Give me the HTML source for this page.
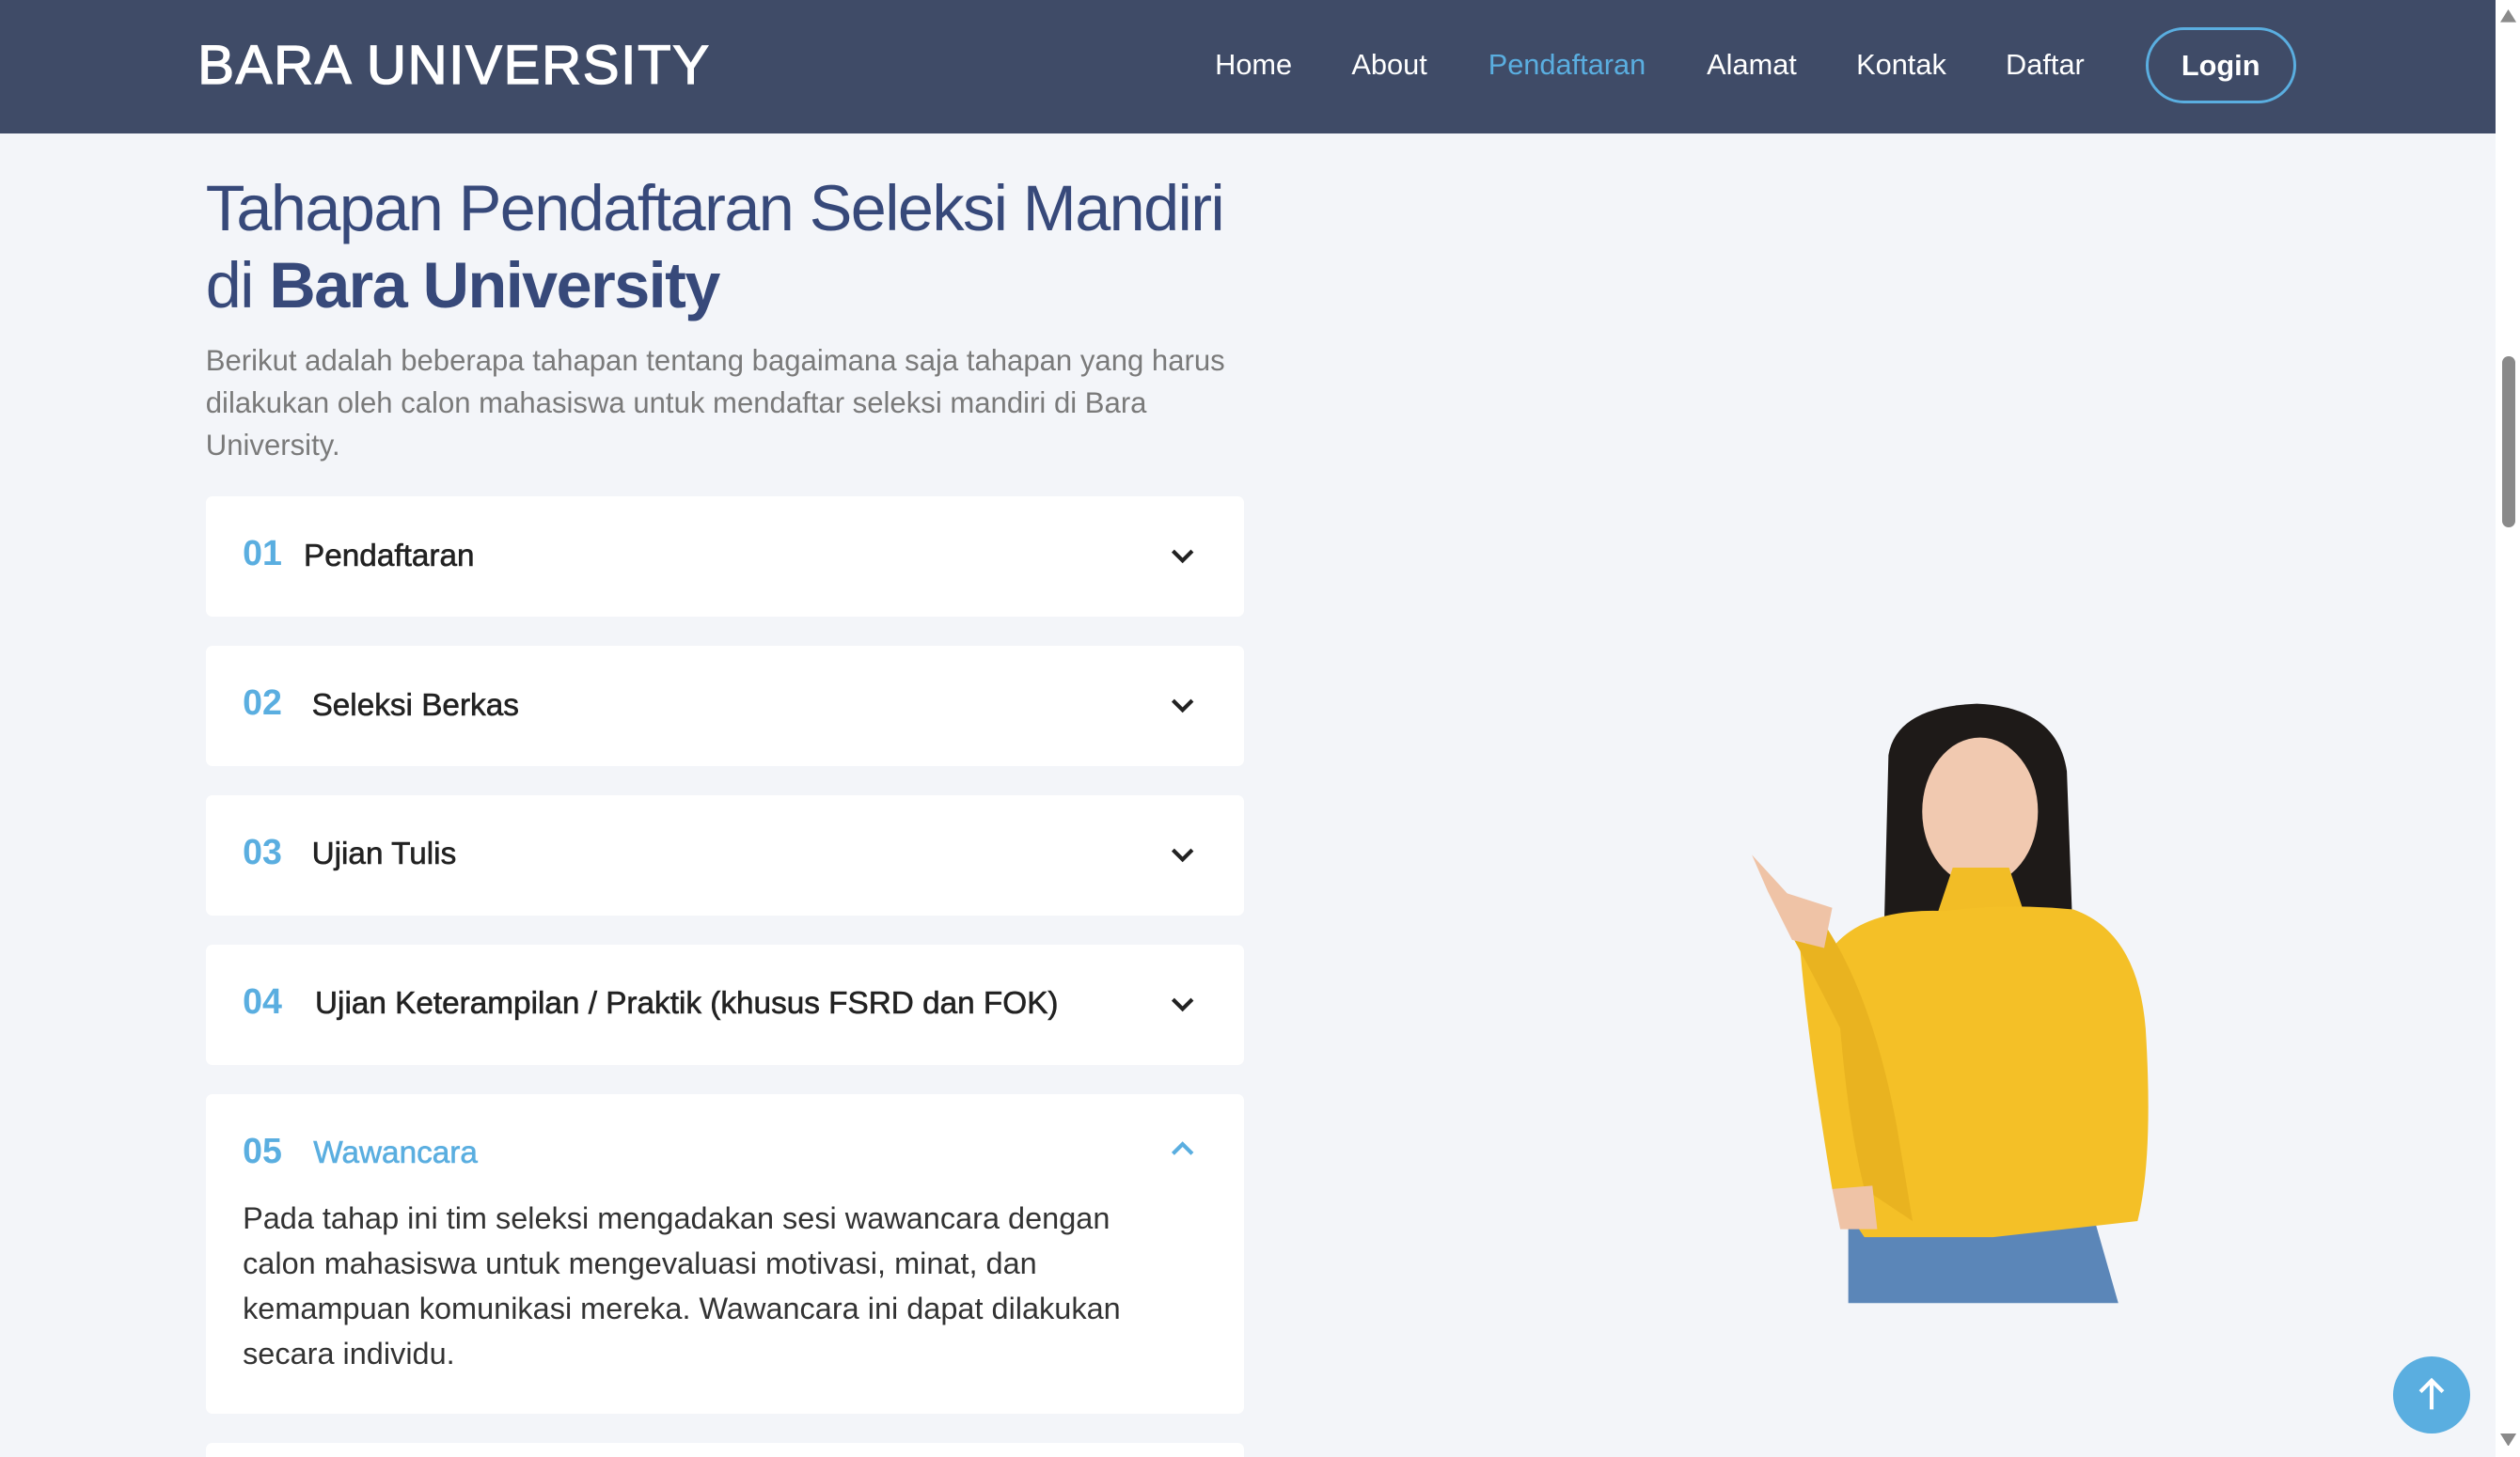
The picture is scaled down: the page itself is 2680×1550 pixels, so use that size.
<!DOCTYPE html>
<html><head><meta charset="utf-8"><style>
html,body{margin:0;padding:0;width:2680px;height:1550px;overflow:hidden;background:#f3f5f9}
#w{zoom:1.70918;width:1568px;height:907px;position:relative;font-family:"Liberation Sans",sans-serif;overflow:hidden}
.nav{position:absolute;left:0;top:0;width:1553px;height:83px;background:#3f4b67}
.logo{position:absolute;left:123px;top:21px;color:#fff;font-size:34px;letter-spacing:1px;-webkit-text-stroke:0.8px #fff}
.nav a{position:absolute;top:30px;color:#fff;font-size:18px}
.login{position:absolute;left:1335px;top:17px;width:90px;height:44px;border:2px solid #5aaee0;border-radius:24px;color:#fff;font-weight:bold;font-size:18px;text-align:center;line-height:44px}
h1{position:absolute;left:128px;top:106px;margin:0;font-weight:normal;font-size:40px;line-height:48px;color:#37497a;letter-spacing:-0.9px}
p.i{position:absolute;left:128px;top:211px;margin:0;width:650px;font-size:18.2px;line-height:26.5px;color:#7a7a7a}
.c{position:absolute;left:128px;width:646px;height:75px;background:#fff;border-radius:4px}
.c .n{position:absolute;left:23px;top:23px;font-size:22px;font-weight:bold;color:#5aaee0}
.c .t{position:absolute;top:26px;font-size:19.5px;color:#222;-webkit-text-stroke:0.35px #222}
.c svg{position:absolute;left:600px;top:31px}
.sb{position:absolute;left:1553px;top:0;width:15px;height:907px;background:#fff}
</style></head><body><div id="w">
<div class="nav">
<div class="logo">BARA UNIVERSITY</div>
<a style="left:756px">Home</a><a style="left:841px">About</a><a style="left:926px;color:#5aaee0">Pendaftaran</a><a style="left:1062px">Alamat</a><a style="left:1155px">Kontak</a><a style="left:1248px">Daftar</a>
<div class="login">Login</div>
</div>
<h1>Tahapan Pendaftaran Seleksi Mandiri<br>di <b>Bara University</b></h1>
<p class="i">Berikut adalah beberapa tahapan tentang bagaimana saja tahapan yang harus dilakukan oleh calon mahasiswa untuk mendaftar seleksi mandiri di Bara University.</p>

<div class="c" style="top:309px"><span class="n">01</span><span class="t" style="left:61px">Pendaftaran</span><svg width="16" height="12" viewBox="0 0 16 12"><path d="M2 3l6 6 6-6" fill="none" stroke="#222" stroke-width="2.4"/></svg></div>
<div class="c" style="top:402px"><span class="n">02</span><span class="t" style="left:66px">Seleksi Berkas</span><svg width="16" height="12" viewBox="0 0 16 12"><path d="M2 3l6 6 6-6" fill="none" stroke="#222" stroke-width="2.4"/></svg></div>
<div class="c" style="top:495px"><span class="n">03</span><span class="t" style="left:66px">Ujian Tulis</span><svg width="16" height="12" viewBox="0 0 16 12"><path d="M2 3l6 6 6-6" fill="none" stroke="#222" stroke-width="2.4"/></svg></div>
<div class="c" style="top:588px"><span class="n">04</span><span class="t" style="left:68px">Ujian Keterampilan / Praktik (khusus FSRD dan FOK)</span><svg width="16" height="12" viewBox="0 0 16 12"><path d="M2 3l6 6 6-6" fill="none" stroke="#222" stroke-width="2.4"/></svg></div>
<div class="c" style="top:681px;height:199px"><span class="n">05</span><span class="t" style="left:67px;color:#5aaee0;-webkit-text-stroke:0.35px #5aaee0">Wawancara</span><svg width="16" height="12" viewBox="0 0 16 12" style="top:28px"><path d="M2 9l6-6 6 6" fill="none" stroke="#5aaee0" stroke-width="2.4"/></svg>
<div style="position:absolute;left:23px;top:64px;width:590px;font-size:19px;line-height:28px;color:#333">Pada tahap ini tim seleksi mengadakan sesi wawancara dengan calon mahasiswa untuk mengevaluasi motivasi, minat, dan kemampuan komunikasi mereka. Wawancara ini dapat dilakukan secara individu.</div></div>
<div class="c" style="top:898px"></div>

<svg style="position:absolute;left:1080px;top:430px" width="270" height="385" viewBox="1080 430 270 385">
<path d="M1150 752 L1300 748 L1318 811 L1150 811Z" fill="#5b86b8"/>
<path d="M1175 470 Q1180 440 1230 438 Q1280 440 1286 480 L1290 590 L1172 590Z" fill="#1e1a18"/>
<ellipse cx="1232" cy="505" rx="36" ry="46" fill="#f1c9b0"/>
<path d="M1215 540 L1250 540 L1260 570 L1205 570Z" fill="#f2bd26"/>
<path d="M1140 590 Q1160 565 1210 567 Q1250 562 1290 566 Q1330 580 1335 640 Q1340 720 1330 760 L1240 770 L1160 770 L1140 740 Q1125 650 1120 590Z" fill="#f4c027"/>
<path d="M1108 570 Q1125 600 1145 640 Q1150 700 1160 740 L1190 760 L1180 700 Q1165 620 1135 575Z" fill="#e9b320"/>
<path d="M1090 532 L1112 556 L1140 565 L1135 590 L1115 585 L1100 555Z" fill="#efc3a6"/>
<path d="M1140 740 L1165 738 L1168 765 L1145 765Z" fill="#efc3a6"/>
</svg>

<div style="position:absolute;left:1489px;top:844px;width:48px;height:48px;border-radius:50%;background:#5aaee0"><svg width="48" height="48" viewBox="0 0 48 48"><path d="M24 33V15M17 22l7-7 7 7" fill="none" stroke="#fff" stroke-width="2.4"/></svg></div>
<div class="sb"><div style="position:absolute;left:4px;top:222px;width:8px;height:106px;background:#8a8a8a;border-radius:4px"></div>
<svg style="position:absolute;left:3px;top:6px" width="10" height="8"><path d="M0 8L5 0L10 8Z" fill="#8a8a8a"/></svg>
<svg style="position:absolute;left:3px;top:892px" width="10" height="8"><path d="M0 0L5 8L10 0Z" fill="#8a8a8a"/></svg></div>
</div></body></html>
